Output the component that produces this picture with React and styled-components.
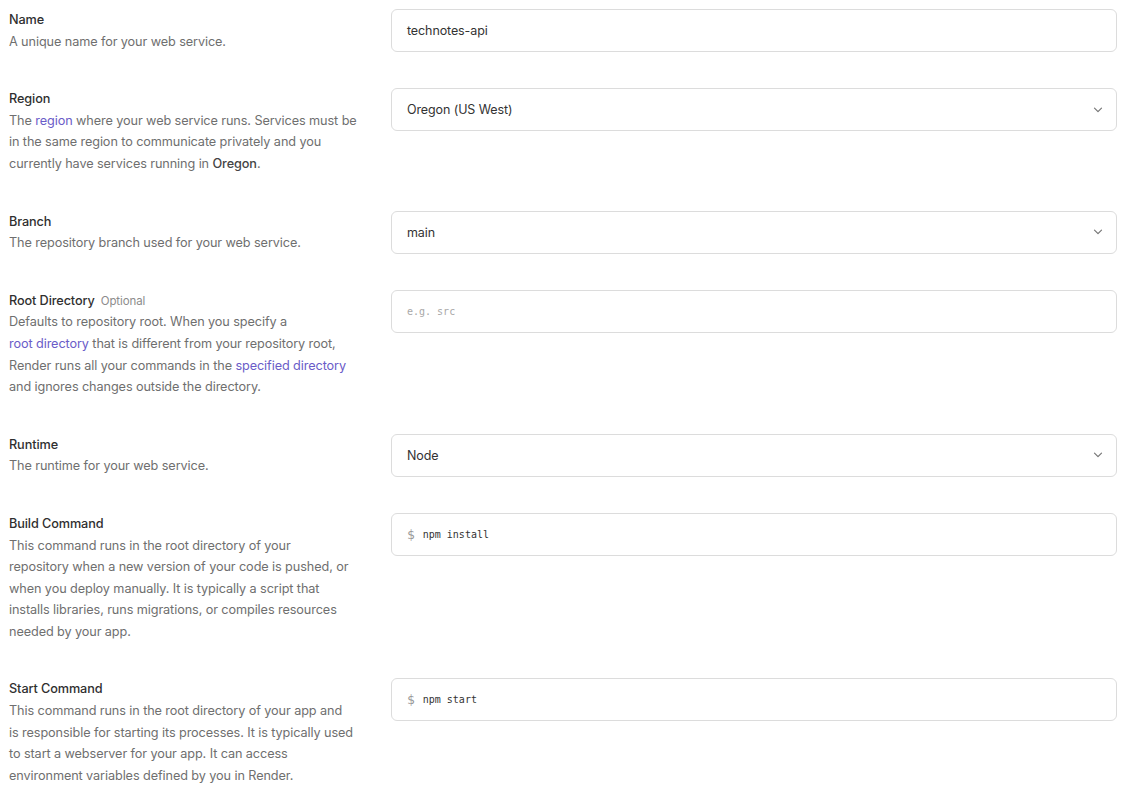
import React from "react";
import styled, { createGlobalStyle } from "styled-components";

const GlobalStyle = createGlobalStyle`
  body {
    margin: 0;
    background: #ffffff;
    font-family: Inter, "Noto Sans", "Liberation Sans", sans-serif;
  }
`;

const Page = styled.div`
  display: flex;
  flex-direction: column;
  gap: 36px;
  padding: 9px 25px 40px 9px;
`;

const Row = styled.div`
  display: grid;
  grid-template-columns: 362px 1fr;
  column-gap: 20px;
  align-items: start;
`;

const Info = styled.div`
  font-size: 12.7px;
  letter-spacing: -0.1px;
  line-height: 21.6px;
`;

const Label = styled.div`
  color: #2f2f2f;
  font-weight: 500;
`;

const Optional = styled.span`
  color: #8c8c8c;
  font-weight: 400;
  font-size: 11.5px;
  line-height: 1;
  margin-left: 6px;
`;

const Description = styled.div`
  color: #6f6f6f;
`;

const TextLink = styled.a`
  color: #6a5cc8;
  text-decoration: none;
`;

const Strong = styled.span`
  color: #444;
  font-weight: 500;
`;

const Field = styled.div`
  display: flex;
  align-items: center;
  height: 43px;
  box-sizing: border-box;
  border: 1px solid #dcdcdc;
  border-radius: 6px;
  padding: 0 13px 0 15px;
  background: #fff;
  font-size: 12.5px;
  letter-spacing: -0.1px;
  color: #333;
`;

const Value = styled.span`
  flex: 1;
`;

const Mono = styled.span`
  flex: 1;
  font-family: "DejaVu Sans Mono", "Liberation Mono", monospace;
  font-size: 10px;
  letter-spacing: 0;
  color: ${({ $muted }) => ($muted ? "#a8a8a8" : "#333")};
`;

const Dollar = styled.span`
  color: #9a9a9a;
  margin-right: 8px;
  font-size: 13px;
  font-family: "DejaVu Sans Mono", "Liberation Mono", monospace;
`;

const Chevron = () => (
  <svg width="10" height="10" viewBox="0 0 10 10" fill="none">
    <path d="M1.5 3.2 5 6.7l3.5-3.5" stroke="#777" strokeWidth="1.2" strokeLinecap="round" strokeLinejoin="round" />
  </svg>
);

const App = () => (
  <>
    <GlobalStyle />
    <Page>
      <Row>
        <Info>
          <Label>Name</Label>
          <Description>A unique name for your web service.</Description>
        </Info>
        <Field>
          <Value>technotes-api</Value>
        </Field>
      </Row>

      <Row>
        <Info>
          <Label>Region</Label>
          <Description>
            The <TextLink href="#">region</TextLink> where your web service runs. Services must be
            <br />
            in the same region to communicate privately and you
            <br />
            currently have services running in <Strong>Oregon</Strong>.
          </Description>
        </Info>
        <Field>
          <Value>Oregon (US West)</Value>
          <Chevron />
        </Field>
      </Row>

      <Row>
        <Info>
          <Label>Branch</Label>
          <Description>The repository branch used for your web service.</Description>
        </Info>
        <Field>
          <Value>main</Value>
          <Chevron />
        </Field>
      </Row>

      <Row>
        <Info>
          <Label>
            Root Directory<Optional>Optional</Optional>
          </Label>
          <Description>
            Defaults to repository root. When you specify a
            <br />
            <TextLink href="#">root directory</TextLink> that is different from your repository root,
            <br />
            Render runs all your commands in the <TextLink href="#">specified directory</TextLink>
            <br />
            and ignores changes outside the directory.
          </Description>
        </Info>
        <Field>
          <Mono $muted>e.g. src</Mono>
        </Field>
      </Row>

      <Row>
        <Info>
          <Label>Runtime</Label>
          <Description>The runtime for your web service.</Description>
        </Info>
        <Field>
          <Value>Node</Value>
          <Chevron />
        </Field>
      </Row>

      <Row>
        <Info>
          <Label>Build Command</Label>
          <Description>
            This command runs in the root directory of your
            <br />
            repository when a new version of your code is pushed, or
            <br />
            when you deploy manually. It is typically a script that
            <br />
            installs libraries, runs migrations, or compiles resources
            <br />
            needed by your app.
          </Description>
        </Info>
        <Field>
          <Dollar>$</Dollar>
          <Mono>npm install</Mono>
        </Field>
      </Row>

      <Row>
        <Info>
          <Label>Start Command</Label>
          <Description>
            This command runs in the root directory of your app and
            <br />
            is responsible for starting its processes. It is typically used
            <br />
            to start a webserver for your app. It can access
            <br />
            environment variables defined by you in Render.
          </Description>
        </Info>
        <Field>
          <Dollar>$</Dollar>
          <Mono>npm start</Mono>
        </Field>
      </Row>
    </Page>
  </>
);

export default App;
